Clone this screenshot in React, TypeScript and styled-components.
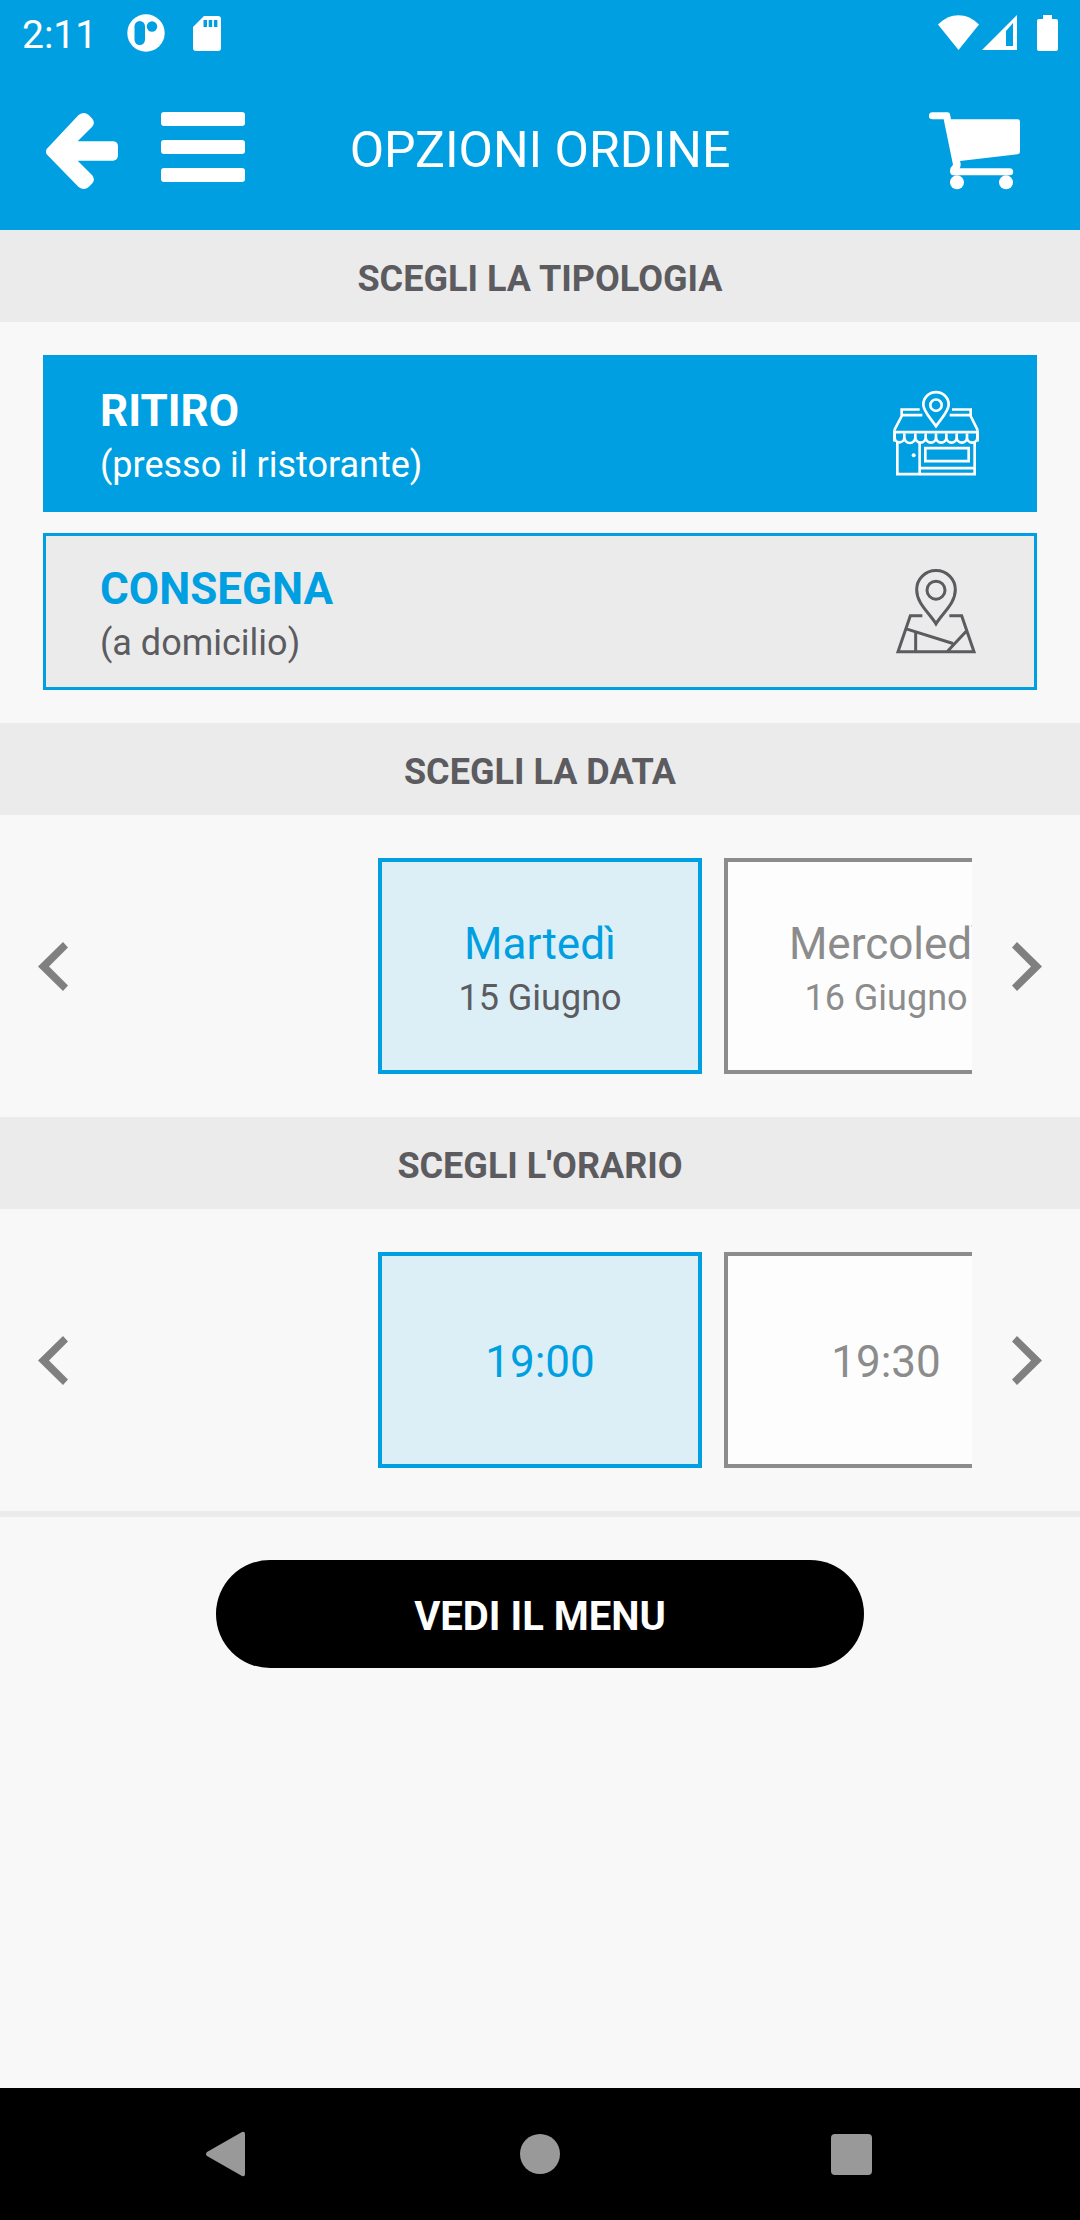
import React, { useState } from "react";
import styled, { createGlobalStyle } from "styled-components";

const blue = "#009fe1";
const ink = "#5b5b60";
const muted = "#8c8c8c";
const band = "#ebebeb";
const paper = "#f8f8f8";

const GlobalStyle = createGlobalStyle`
  *, *::before, *::after { box-sizing: border-box; }
  body {
    margin: 0;
    background: ${paper};
    color: ${ink};
    font-family: Roboto, "Liberation Sans", sans-serif;
  }
  button {
    margin: 0;
    padding: 0;
    border: 0;
    background: none;
    color: inherit;
    font: inherit;
    cursor: pointer;
  }
  svg { display: block; flex: none; }
`;

const Screen = styled.div`
  display: flex;
  flex-direction: column;
  min-height: 100vh;
`;

const StatusBar = styled.div`
  display: flex;
  align-items: center;
  justify-content: space-between;
  height: 66px;
  padding: 0 22px;
  background: ${blue};
  color: #fff;
`;

const StatusGroup = styled.div<{ $gap: number }>`
  display: flex;
  align-items: center;
  gap: ${(p) => p.$gap}px;
`;

const Clock = styled.span`
  margin-right: 2px;
  padding-top: 3px;
  font-size: 39px;
  line-height: 48px;
`;

const AppBar = styled.header`
  display: grid;
  grid-template-columns: 1fr auto 1fr;
  align-items: center;
  height: 164px;
  padding: 6px 60px 0 44px;
  background: ${blue};
  color: #fff;
`;

const BarActions = styled.div`
  display: flex;
  align-items: flex-start;
  gap: 40px;
`;

const CartButton = styled.button`
  justify-self: end;
`;

const Title = styled.h1`
  margin: 0 0 0 16px;
  padding-bottom: 2px;
  font-size: 50px;
  font-weight: 400;
  line-height: 60px;
  white-space: nowrap;
`;

const SectionTitle = styled.h2`
  margin: 0;
  padding: 25px 16px 19px;
  background: ${band};
  font-size: 36px;
  font-weight: 700;
  line-height: 48px;
  text-align: center;
`;

const OptionList = styled.div`
  display: flex;
  flex-direction: column;
  gap: 21px;
  padding: 33px 43px;
`;

const Option = styled.button<{ $selected: boolean }>`
  display: flex;
  align-items: center;
  justify-content: space-between;
  height: 157px;
  padding: 0 54px;
  border: 3px solid ${blue};
  background: ${(p) => (p.$selected ? blue : band)};
  color: ${(p) => (p.$selected ? "#fff" : ink)};
  text-align: left;
`;

const Lines = styled.span`
  display: flex;
  flex-direction: column;
  padding-top: 3px;
`;

const OptionName = styled.span<{ $selected: boolean }>`
  color: ${(p) => (p.$selected ? "#fff" : blue)};
  font-size: 44px;
  font-weight: 700;
  line-height: 60px;
`;

const Detail = styled.span`
  font-size: 36px;
  line-height: 48px;
`;

const Carousel = styled.div`
  display: flex;
  align-items: stretch;
  padding: 43px 0;
`;

const Step = styled.button`
  display: flex;
  flex: none;
  align-items: center;
  justify-content: center;
  width: 108px;
`;

const Track = styled.div`
  display: flex;
  flex: 1;
  gap: 22px;
  min-width: 0;
  padding-left: calc(50% - 270px);
  overflow: hidden;
`;

const Slot = styled.button<{ $selected: boolean }>`
  display: flex;
  flex: none;
  align-items: center;
  justify-content: center;
  width: 324px;
  height: 216px;
  border: 4px solid ${(p) => (p.$selected ? blue : muted)};
  background: ${(p) => (p.$selected ? "#ddeff6" : "#fdfdfd")};
  color: ${(p) => (p.$selected ? ink : muted)};
  text-align: center;
`;

const SlotName = styled.span<{ $selected: boolean }>`
  color: ${(p) => (p.$selected ? blue : muted)};
  font-size: 44px;
  line-height: 60px;
`;

const Footer = styled.div`
  display: flex;
  flex: 1;
  align-items: flex-start;
  justify-content: center;
  padding: 43px 0;
  border-top: 6px solid ${band};
`;

const MenuButton = styled.button`
  width: 60%;
  height: 108px;
  padding-top: 5px;
  border-radius: 54px;
  background: #000;
  color: #fff;
  font-size: 40px;
  font-weight: 700;
  line-height: 48px;
`;

const SystemNav = styled.nav`
  display: flex;
  justify-content: center;
  height: 132px;
  background: #000;
`;

const NavKey = styled.button`
  display: flex;
  align-items: center;
  justify-content: center;
  width: 311px;
`;

const StoreIcon = () => (
  <svg width="88" height="87" viewBox="96 150 264 260" fill="none" stroke="currentColor" strokeWidth="8" aria-hidden="true">
    <path d="M228 258C212 234 190 214 190 193a38 37 0 0 1 76 0c0 21-22 41-38 65z" />
    <circle cx="228" cy="195" r="17" />
    <path d="M179 208H125v17H187M276 208h56v17H269M126 226L103 270M331 226l22 44" />
    <path d="M103 304V270M353 304V270M103 276H353" />
    <path d="M104 280v12a14 14 0 0 0 29 0v-12v12a16 16 0 0 0 33 0v-12v12a15 15 0 0 0 31 0v-12v12a15 15 0 0 0 31 0v-12v12a15 15 0 0 0 31 0v-12v12a15 15 0 0 0 31 0v-12v12a15 15 0 0 0 31 0v-12v12a15 15 0 0 0 31 0v-12" />
    <path d="M112 304V402H344V304M179 306V402M180 384H344" />
    <path d="M196 324H326V363H196z" />
    <circle cx="161" cy="345" r="6" fill="currentColor" stroke="none" />
  </svg>
);

const MapIcon = () => (
  <svg width="88" height="87" viewBox="96 684 264 260" fill="none" stroke="currentColor" strokeWidth="9" aria-hidden="true">
    <path d="M228 851C206 816 170 790 170 748a58 57 0 0 1 116 0c0 42-36 68-58 103z" />
    <circle cx="228" cy="750" r="27" />
    <path d="M187 827H151L114 935H342L305 827H268M141 867L279 910M318 874L262 934M167 877V934" />
  </svg>
);

const Chevron = ({ right = false }: { right?: boolean }) => (
  <svg width="32" height="49" viewBox={right ? "-2 0 32 49" : "0 0 32 49"} fill="#808080" aria-hidden="true">
    <path d={right ? "M5 0L0 5.500L19 24.500L0 43.500L5 49L30 24.500z" : "M25 0L30 5.500L11 24.500L30 43.500L25 49L0 24.500z"} />
  </svg>
);

const options = [
  { id: "ritiro", name: "RITIRO", detail: "(presso il ristorante)", Icon: StoreIcon },
  { id: "consegna", name: "CONSEGNA", detail: "(a domicilio)", Icon: MapIcon },
];

const days = [
  { name: "Martedì", detail: "15 Giugno" },
  { name: "Mercoledì", detail: "16 Giugno" },
];

const times = [{ name: "19:00" }, { name: "19:30" }];

type SlotItem = { name: string; detail?: string };

function SlotPicker({ label, items }: { label: string; items: SlotItem[] }) {
  const [current, setCurrent] = useState(0);
  return (
    <Carousel role="group" aria-label={label}>
      <Step type="button" aria-label="Precedente" onClick={() => setCurrent(Math.max(0, current - 1))}>
        <Chevron />
      </Step>
      <Track>
        {items.map((item, i) => (
          <Slot key={item.name} type="button" $selected={i === current} aria-pressed={i === current} onClick={() => setCurrent(i)}>
            <Lines>
              <SlotName $selected={i === current}>{item.name}</SlotName>
              {item.detail && <Detail>{item.detail}</Detail>}
            </Lines>
          </Slot>
        ))}
      </Track>
      <Step type="button" aria-label="Successivo" onClick={() => setCurrent(Math.min(items.length - 1, current + 1))}>
        <Chevron right />
      </Step>
    </Carousel>
  );
}

export default function App() {
  const [mode, setMode] = useState("ritiro");
  return (
    <Screen>
      <GlobalStyle />
      <StatusBar>
        <StatusGroup $gap={28}>
          <Clock>2:11</Clock>
          <svg width="38" height="38" viewBox="0 0 38 38" aria-hidden="true">
            <circle cx="19" cy="19" r="18.700" fill="#fff" />
            <rect x="7.500" y="7" width="10.500" height="24" rx="5.200" fill={blue} />
            <circle cx="25" cy="12.500" r="5.200" fill={blue} />
          </svg>
          <svg width="28" height="35" viewBox="0 0 28 35" aria-hidden="true">
            <path d="M11 0H25a3 3 0 0 1 3 3V32a3 3 0 0 1-3 3H3a3 3 0 0 1-3-3V11z" fill="#fff" />
            <path d="M10.500 4h3.500v7h-3.500zM15.700 4h3.500v7h-3.500zM20.900 4h3.500v7h-3.500z" fill={blue} />
          </svg>
        </StatusGroup>
        <StatusGroup $gap={3}>
          <svg width="41" height="36" viewBox="0 0 41 36" fill="#fff" aria-hidden="true">
            <path d="M20.500 35L0 9.500C12-3 29-3 41 9.500z" />
          </svg>
          <svg width="52" height="36" viewBox="0 0 52 36" fill="#fff" aria-hidden="true">
            <path fillRule="evenodd" d="M0 35L35 0V35zM24 16V31H31V8z" />
          </svg>
          <svg width="21" height="36" viewBox="0 0 21 36" fill="#fff" aria-hidden="true">
            <path d="M6 0h9v4h4a2 2 0 0 1 2 2V34a2 2 0 0 1-2 2H2a2 2 0 0 1-2-2V6a2 2 0 0 1 2-2h4z" />
          </svg>
        </StatusGroup>
      </StatusBar>

      <AppBar>
        <BarActions>
          <button type="button" aria-label="Indietro">
            <svg width="77" height="78" viewBox="132 336 231 234" fill="none" aria-hidden="true">
              <path
                d="M140 447L235 346Q251 332 266 345L275 354Q288 367 276 381L233 424H340Q354 425 354 440V466Q354 481 340 482H233L276 525Q288 539 275 552L266 561Q251 574 235 560L140 463Q136 455 140 447z"
                fill="#fff"
              />
            </svg>
          </button>
          <button type="button" aria-label="Menu">
            <svg width="84" height="70" viewBox="0 0 84 70" fill="#fff" aria-hidden="true">
              <rect width="84" height="14" rx="3" />
              <rect y="28" width="84" height="14" rx="3" />
              <rect y="56" width="84" height="14" rx="3" />
            </svg>
          </button>
        </BarActions>
        <Title>OPZIONI ORDINE</Title>
        <CartButton type="button" aria-label="Carrello">
          <svg width="91" height="78" viewBox="147 335 273 234" fill="#fff" aria-hidden="true">
            <path d="M157 336H203Q209 336 210 342L213 357H413Q420 357 420 364V455Q420 461 413 462L240 482Q244 492 240 502L238 504H389a10 10 0 0 1 0 21H220Q210 524 210 512Q211 500 219 493L191 357H157a10 10 0 0 1 0-21z" />
            <circle cx="231" cy="546" r="21" />
            <circle cx="378" cy="546" r="21" />
          </svg>
        </CartButton>
      </AppBar>

      <SectionTitle>SCEGLI LA TIPOLOGIA</SectionTitle>
      <OptionList>
        {options.map(({ id, name, detail, Icon }) => (
          <Option key={id} type="button" $selected={mode === id} aria-pressed={mode === id} onClick={() => setMode(id)}>
            <Lines>
              <OptionName $selected={mode === id}>{name}</OptionName>
              <Detail>{detail}</Detail>
            </Lines>
            <Icon />
          </Option>
        ))}
      </OptionList>

      <SectionTitle>SCEGLI LA DATA</SectionTitle>
      <SlotPicker label="Data" items={days} />

      <SectionTitle>SCEGLI L'ORARIO</SectionTitle>
      <SlotPicker label="Orario" items={times} />

      <Footer>
        <MenuButton type="button">VEDI IL MENU</MenuButton>
      </Footer>

      <SystemNav aria-label="Sistema">
        <NavKey type="button" aria-label="Indietro">
          <svg width="46" height="46" viewBox="0 0 46 46" fill="#999" aria-hidden="true">
            <path d="M1 21L36 1Q39 0 39 3V43Q39 46 36 45L1 25Q-1 23 1 21z" />
          </svg>
        </NavKey>
        <NavKey type="button" aria-label="Home">
          <svg width="40" height="40" viewBox="0 0 40 40" fill="#999" aria-hidden="true">
            <circle cx="20" cy="20" r="20" />
          </svg>
        </NavKey>
        <NavKey type="button" aria-label="Recenti">
          <svg width="41" height="41" viewBox="0 0 41 41" fill="#999" aria-hidden="true">
            <rect width="41" height="41" rx="4" />
          </svg>
        </NavKey>
      </SystemNav>
    </Screen>
  );
}
